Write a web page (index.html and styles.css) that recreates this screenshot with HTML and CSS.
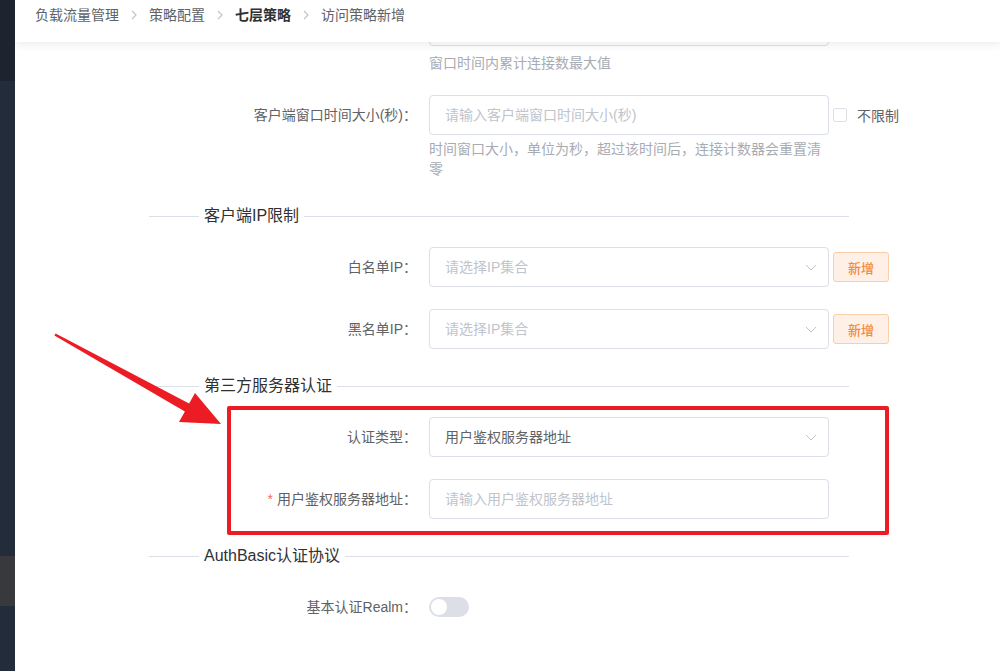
FILE: index.html
```html
<!DOCTYPE html>
<html lang="zh-CN">
<head>
  <meta charset="UTF-8" />
  <title>访问策略新增</title>
  <link rel="stylesheet" href="styles.css">
</head>
<body>

  <aside class="sidebar">
    <div class="sidebar-top"></div>
    <div class="sidebar-mid"></div>
    <div class="sidebar-active"></div>
    <div class="sidebar-rest"></div>
  </aside>

  <main class="main">
    <header class="topbar">
      <span class="crumb">负载流量管理</span>
      <svg class="sep" viewBox="0 0 14 14"><path d="M5 3l4 4-4 4" fill="none" stroke="#c0c4cc" stroke-width="1.2"/></svg>
      <span class="crumb">策略配置</span>
      <svg class="sep" viewBox="0 0 14 14"><path d="M5 3l4 4-4 4" fill="none" stroke="#c0c4cc" stroke-width="1.2"/></svg>
      <span class="crumb current">七层策略</span>
      <svg class="sep" viewBox="0 0 14 14"><path d="M5 3l4 4-4 4" fill="none" stroke="#c0c4cc" stroke-width="1.2"/></svg>
      <span class="crumb">访问策略新增</span>
    </header>

    <form class="form">
      <!-- row scrolled under the breadcrumb bar -->
      <div class="form-item">
        <label class="form-label"></label>
        <div class="form-content">
          <div class="input"></div>
          <p class="help help-first">窗口时间内累计连接数最大值</p>
        </div>
      </div>

      <div class="form-item">
        <label class="form-label">客户端窗口时间大小(秒)：</label>
        <div class="form-content">
          <div class="input placeholder">请输入客户端窗口时间大小(秒)</div>
          <p class="help">时间窗口大小，单位为秒，超过该时间后，连接计数器会重置清零</p>
        </div>
        <div class="form-extra">
          <span class="checkbox"></span>
          <span class="checkbox-label">不限制</span>
        </div>
      </div>

      <div class="divider"><span>客户端IP限制</span></div>

      <div class="form-item">
        <label class="form-label">白名单IP：</label>
        <div class="form-content">
          <div class="input select placeholder">请选择IP集合
            <svg class="arrow" viewBox="0 0 12 12"><path d="M1 4l5 5 5-5" fill="none" stroke="#c0c4cc" stroke-width="1"/></svg>
          </div>
        </div>
        <div class="form-extra"><button type="button" class="btn-add">新增</button></div>
      </div>

      <div class="form-item">
        <label class="form-label">黑名单IP：</label>
        <div class="form-content">
          <div class="input select placeholder">请选择IP集合
            <svg class="arrow" viewBox="0 0 12 12"><path d="M1 4l5 5 5-5" fill="none" stroke="#c0c4cc" stroke-width="1"/></svg>
          </div>
        </div>
        <div class="form-extra"><button type="button" class="btn-add">新增</button></div>
      </div>

      <div class="divider"><span>第三方服务器认证</span></div>

      <div class="form-item">
        <label class="form-label">认证类型：</label>
        <div class="form-content">
          <div class="input select">用户鉴权服务器地址
            <svg class="arrow" viewBox="0 0 12 12"><path d="M1 4l5 5 5-5" fill="none" stroke="#c0c4cc" stroke-width="1"/></svg>
          </div>
        </div>
      </div>

      <div class="form-item">
        <label class="form-label"><i class="required">*</i>用户鉴权服务器地址：</label>
        <div class="form-content">
          <div class="input placeholder">请输入用户鉴权服务器地址</div>
        </div>
      </div>

      <div class="divider"><span>AuthBasic认证协议</span></div>

      <div class="form-item">
        <label class="form-label">基本认证Realm：</label>
        <div class="form-content switch-wrap">
          <span class="switch"><span class="knob"></span></span>
        </div>
      </div>
    </form>
  </main>

  <!-- annotation -->
  <div class="mark-box"></div>
  <svg class="mark-arrow" viewBox="0 0 1000 671">
    <polygon points="55.6,333.4 189.1,403.5 195,393 221,424 179,422 184.9,411.5 54.4,335.6" fill="#ec1c24"/>
  </svg>

</body>
</html>
```

FILE: styles.css
```css
* { margin:0; padding:0; box-sizing:border-box; }
body { font-family:"Liberation Sans", "Noto Sans CJK SC", sans-serif; font-size:14px; color:#606266; background:#fff; display:flex; height:671px; overflow:hidden; position:relative; }

/* sidebar strip */
.sidebar { width:15px; flex-shrink:0; display:flex; flex-direction:column; }
.sidebar-top { height:81px; background:#1d2430; }
.sidebar-mid { height:475px; background:#232c3b; }
.sidebar-active { height:50px; background:#38393d; }
.sidebar-rest { flex:1; background:#232c3b; }

.main { flex:1; position:relative; overflow:hidden; }

/* breadcrumb bar lies over the scrolled form */
.topbar { position:absolute; top:0; left:0; right:0; height:42px; background:#fff; z-index:2; padding-left:20px; display:flex; align-items:flex-start; line-height:30px; white-space:nowrap; box-shadow:0 3px 8px rgba(0,0,0,0.07); }
.crumb { color:#606266; }
.crumb.current { color:#303133; font-weight:700; }
.sep { width:14px; height:14px; margin:8px 8px 0; flex-shrink:0; }

.form { width:700px; margin-left:134px; padding-top:6px; }
.form-item { display:flex; margin-bottom:22px; }
.form-label { width:280px; flex-shrink:0; padding-right:12px; text-align:right; line-height:40px; color:#606266; white-space:nowrap; }
.required { font-style:normal; color:#f56c6c; margin-right:4px; }
.form-content { width:400px; flex-shrink:0; }
.input { height:40px; border:1px solid #dcdfe6; border-radius:4px; padding:0 15px; line-height:38px; color:#606266; background:#fff; }
.input.placeholder { color:#c0c4cc; }
.select { display:flex; justify-content:space-between; align-items:center; padding-right:11px; }
.arrow { width:12px; height:12px; }
.help { margin-top:4px; line-height:20px; color:#a8abb2; }
.help-first { margin-top:7px; }

.form-extra { margin-left:4px; height:40px; display:flex; align-items:center; flex-shrink:0; white-space:nowrap; }
.checkbox { width:14px; height:14px; border:1px solid #dcdfe6; border-radius:2px; }
.checkbox-label { margin-left:10px; color:#606266; }
.btn-add { width:56px; height:30px; border:1px solid #f9cfaa; background:#fef0e6; color:#f28b38; border-radius:3px; font-family:inherit; font-size:13px; font-weight:500; }

.divider { display:flex; align-items:center; margin:26px 0 20px; line-height:22px; font-size:16px; color:#303133; white-space:nowrap; }
.divider::before { content:""; width:50px; height:1px; background:#dcdfe6; }
.divider::after { content:""; flex:1; height:1px; background:#dcdfe6; }
.divider span { padding:0 5px; }

.switch-wrap { display:flex; align-items:center; height:40px; }
.switch { width:40px; height:20px; border-radius:10px; background:#dcdfe6; padding:2px; display:flex; }
.knob { width:16px; height:16px; border-radius:50%; background:#fff; }

/* red annotation */
.mark-box { position:absolute; left:227px; top:406px; width:662px; height:129px; border:4px solid #ec1c24; border-radius:2px; }
.mark-arrow { position:absolute; left:0; top:0; width:1000px; height:671px; pointer-events:none; }
```
